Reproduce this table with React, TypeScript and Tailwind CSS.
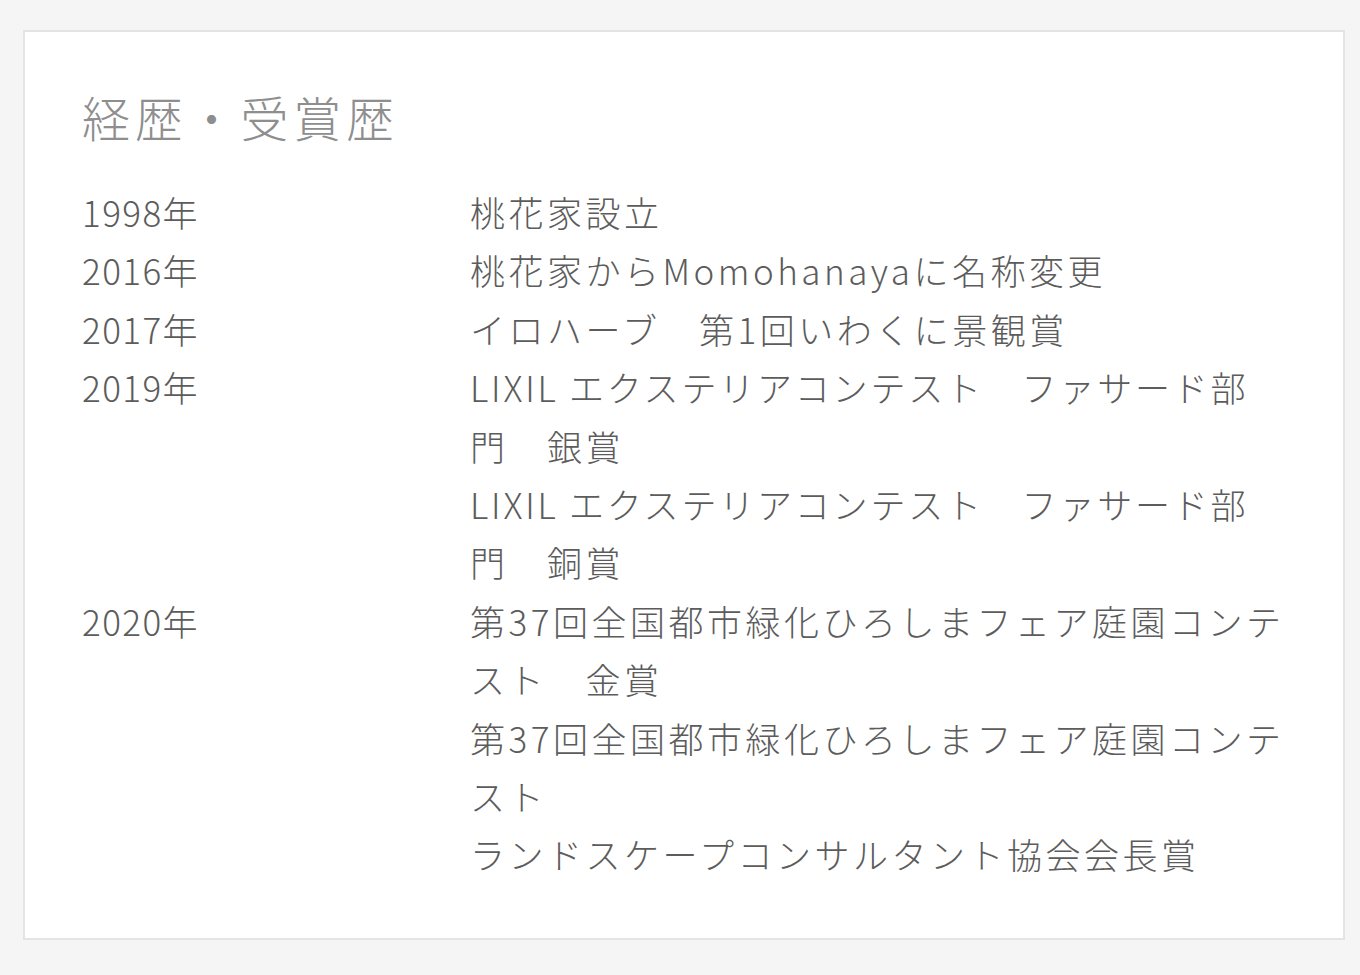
import React from 'react';

type Entry = { year: string; lines: string[] };

const entries: Entry[] = [
  { year: '1998年', lines: ['桃花家設立'] },
  { year: '2016年', lines: ['桃花家からMomohanayaに名称変更'] },
  { year: '2017年', lines: ['イロハーブ　第1回いわくに景観賞'] },
  {
    year: '2019年',
    lines: [
      'LIXIL エクステリアコンテスト　ファサード部',
      '門　銀賞',
      'LIXIL エクステリアコンテスト　ファサード部',
      '門　銅賞',
    ],
  },
  {
    year: '2020年',
    lines: [
      '第37回全国都市緑化ひろしまフェア庭園コンテ',
      'スト　金賞',
      '第37回全国都市緑化ひろしまフェア庭園コンテ',
      'スト',
      'ランドスケープコンサルタント協会会長賞',
    ],
  },
];

const App: React.FC = () => {
  return (
    <div
      className="min-h-[975px] w-full bg-[#f5f5f5] pt-[30px] pl-[23px]"
      style={{ fontFamily: '"Noto Sans CJK JP", "Noto Sans", sans-serif' }}
    >
      <section className="w-[1322px] h-[910px] bg-white border-2 border-[#e4e4e4] pt-[48px] pl-[57px]">
        <h2 className="text-[48px] leading-[72px] tracking-[0.1em] text-[#8e8e8e] font-light">
          経歴・受賞歴
        </h2>

        <div className="mt-[31px] text-[35px] leading-[58.4px] tracking-[0.1em] text-[#5c5c5c] font-light">
          {entries.map((e) => (
            <div key={e.year} className="flex">
              <div className="w-[388px] shrink-0 tracking-[0.04em]">{e.year}</div>
              <div className="flex flex-col whitespace-nowrap">
                {e.lines.map((line, i) => (
                  <span key={i} className={line.startsWith('LIXIL') ? 'tracking-[0.08em]' : ''}>
                    {line}
                  </span>
                ))}
              </div>
            </div>
          ))}
        </div>
      </section>
    </div>
  );
};

export default App;
